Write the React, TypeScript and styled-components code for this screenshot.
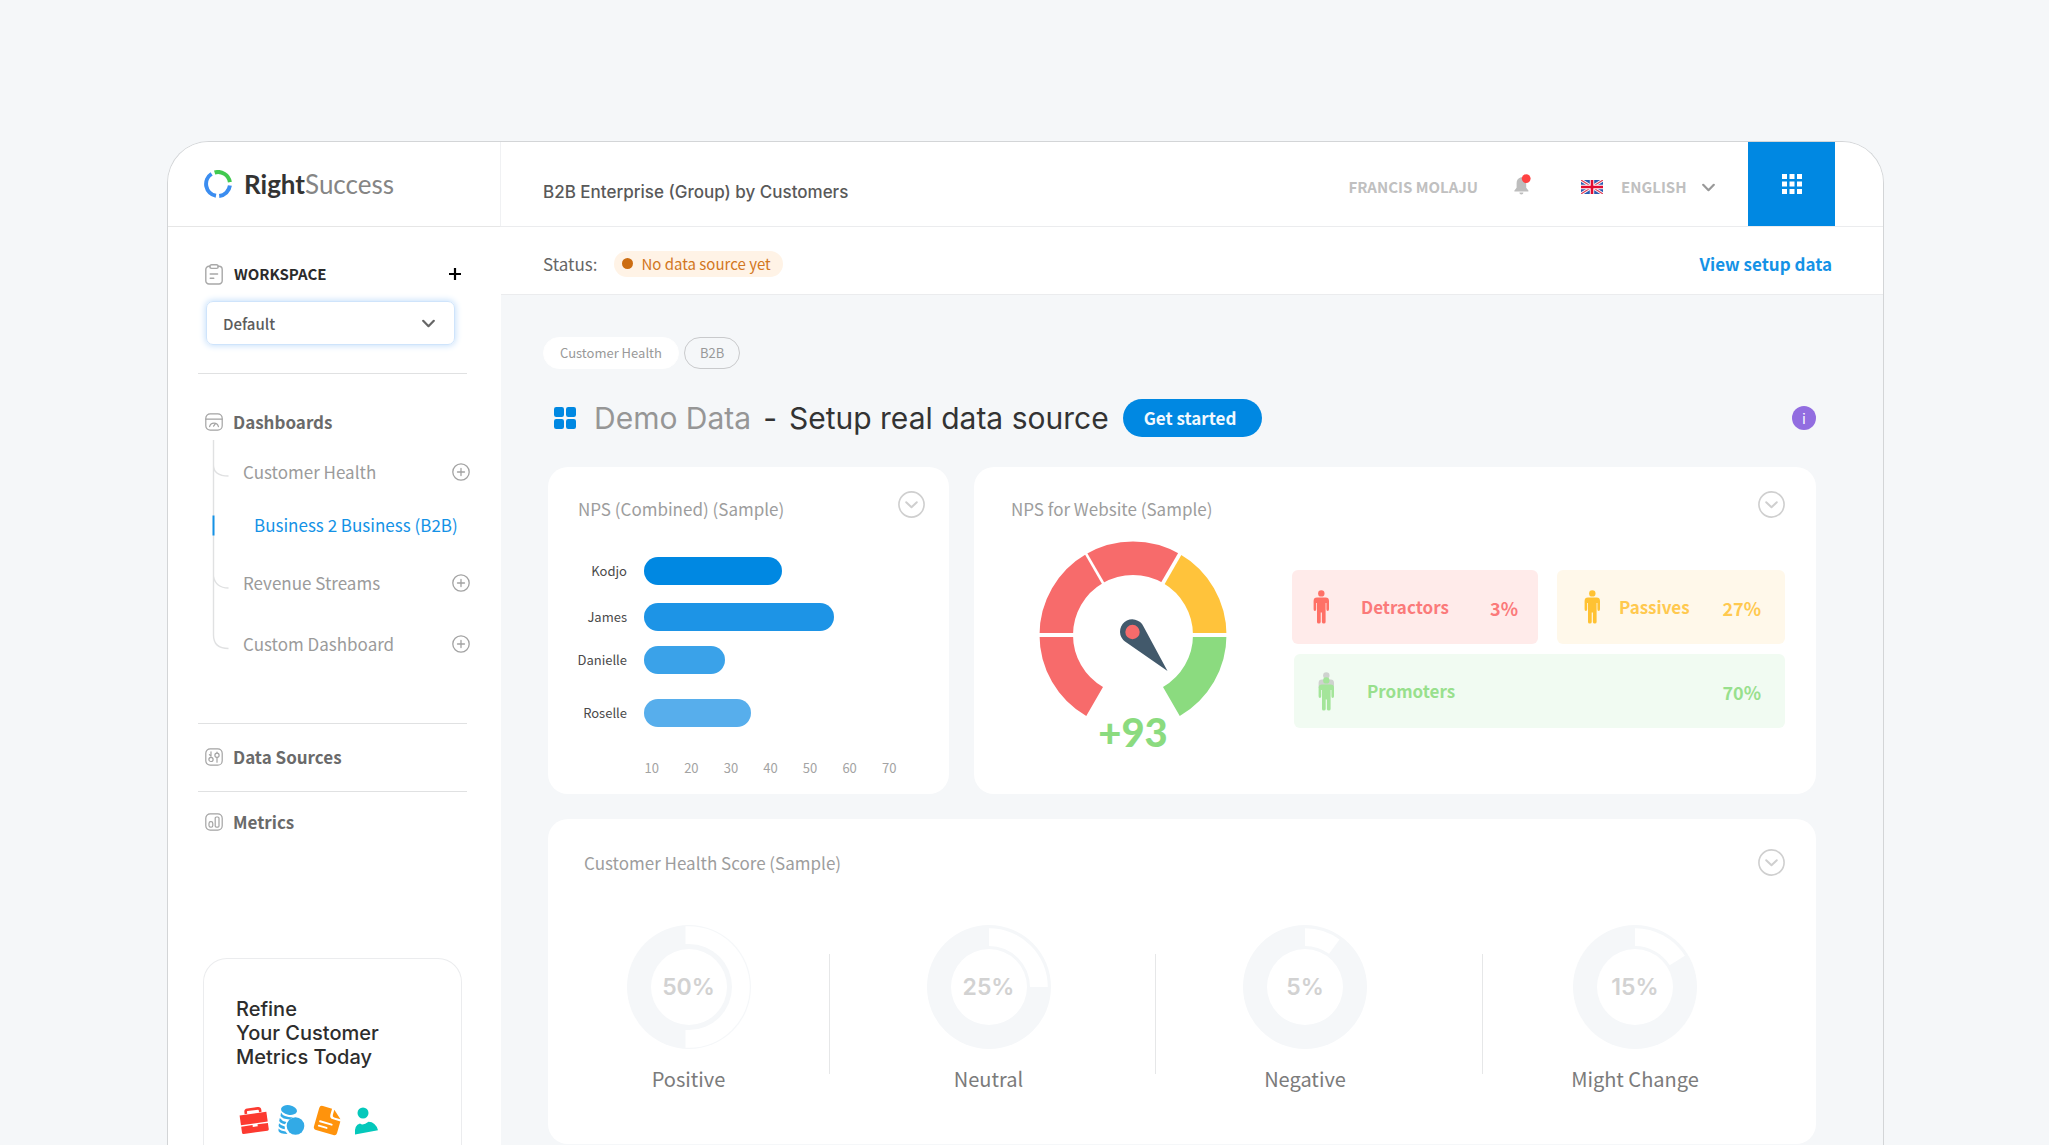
import React from "react";
import styled, { createGlobalStyle } from "styled-components";

const body = `"Noto Sans CJK SC", "Noto Sans", sans-serif`;
const display = `Inter, "Noto Sans", sans-serif`;
const blue = "#0088e2";

const Global = createGlobalStyle`
  *, *::before, *::after { box-sizing: border-box; }
  body { margin: 0; background: #f5f7f9; font-family: ${body}; color: #333; }
  button, select { font: inherit; color: inherit; background: none; border: 0; padding: 0; margin: 0; cursor: pointer; }
  a { text-decoration: none; color: inherit; }
  ul { list-style: none; margin: 0; padding: 0; }
  h1, h2, p { margin: 0; font-weight: 400; }
  svg { display: block; flex: none; }
`;

const Page = styled.div`
  min-height: 100vh;
  padding: 141px 165px 0 167px;
  display: flex;
`;
const Frame = styled.div`
  flex: 1;
  display: grid;
  grid-template-columns: 333px minmax(0, 1fr);
  border: 1px solid #d3d5d7;
  border-bottom: 0;
  border-radius: 42px 42px 0 0;
  overflow: hidden;
`;

/* Sidebar */
const Sidebar = styled.aside`
  background: #fff;
  display: flex;
  flex-direction: column;
`;
const Brand = styled.div`
  height: 85px;
  padding-left: 36px;
  display: flex;
  align-items: center;
  gap: 12px;
  border-bottom: 1px solid #e6e6e6;
  border-right: 1px solid #f0f1f3;
`;
const BrandName = styled.span<{ $light?: boolean }>`
  font-family: Lato, sans-serif;
  font-size: 26px;
  line-height: 32px;
  font-weight: ${(p) => (p.$light ? 400 : 700)};
  color: ${(p) => (p.$light ? "#858585" : "#333")};
`;
const SideBody = styled.div`
  flex: 1;
  display: flex;
  flex-direction: column;
  padding: 35px 34px 0 30px;
`;
const WorkspaceRow = styled.div`
  display: flex;
  align-items: center;
  gap: 11px;
  height: 24px;
  padding: 0 5px 0 7px;
`;
const WorkspaceLabel = styled.label`
  flex: 1;
  font-size: 15px;
  line-height: 24px;
  font-weight: 700;
  color: #2b2b2b;
`;
const WorkspaceField = styled.div`
  display: grid;
  align-items: center;
  height: 44px;
  margin: 15px 12px 28px 8px;
  border: 1px solid #cfe4fb;
  border-radius: 7px;
  box-shadow: 0 0 6px 1px #c8e1fb;
  > * { grid-area: 1 / 1; }
  > svg { justify-self: end; margin-right: 19px; pointer-events: none; }
  select {
    appearance: none;
    height: 42px;
    padding: 0 16px;
    font-size: 15px;
    font-weight: 500;
    color: #5c5c5c;
    outline: 0;
  }
`;
const Rule = styled.hr`
  width: 100%;
  height: 1px;
  margin: 0;
  border: 0;
  background: #e0e1e2;
`;
const SectionLink = styled.a<{ $height: number }>`
  display: flex;
  align-items: center;
  gap: 10px;
  height: ${(p) => p.$height}px;
  padding: 0 0 2px 7px;
  font-size: 17px;
  line-height: 24px;
  font-weight: 700;
  color: #6a6a6a;
`;
const Tree = styled.div`
  display: grid;
  grid-template-columns: 17px 1fr;
  margin-top: -32px;
  padding: 0 0 50px 14px;
`;
const TreeList = styled.ul`
  padding-top: 5px;
`;
const TreeItem = styled.li<{ $height: number; $active?: boolean }>`
  display: flex;
  align-items: center;
  justify-content: space-between;
  height: ${(p) => p.$height}px;
  padding-left: ${(p) => (p.$active ? 25 : 14)}px;
  margin-right: -3px;
  font-size: 17px;
  line-height: 24px;
  white-space: nowrap;
  color: ${(p) => (p.$active ? "#1492e6" : "#9b9b9b")};
`;
const Promo = styled.section`
  flex: 1;
  margin: 104px 5px 0;
  padding: 38px 32px 0;
  border: 1px solid #ebecee;
  border-bottom: 0;
  border-radius: 24px 24px 0 0;
`;
const PromoTitle = styled.h2`
  font-family: ${display};
  font-size: 20px;
  line-height: 24px;
  font-weight: 500;
  color: #2d2d2d;
`;
const PromoIcons = styled.div`
  display: flex;
  gap: 8px;
  padding: 35px 0 0 3px;
`;

/* Main column */
const Main = styled.div`
  display: flex;
  flex-direction: column;
  min-width: 0;
`;
const TopBar = styled.header`
  display: flex;
  align-items: center;
  height: 85px;
  padding: 0 48px 0 42px;
  background: #fff;
  border-bottom: 1px solid #ebecee;
`;
const PageName = styled.p`
  flex: 1;
  padding-top: 15px;
  font-family: ${display};
  font-size: 17px;
  line-height: 24px;
  font-weight: 500;
  color: #595959;
`;
const TopText = styled.span`
  padding-top: 6px;
  font-size: 15px;
  line-height: 24px;
  font-weight: 700;
  color: #c0c0c0;
`;
const IconButton = styled.button`
  display: flex;
  align-items: center;
  justify-content: center;
`;
const BellButton = styled(IconButton)`
  margin: 0 50px 0 36px;
`;
const Language = styled.label`
  display: grid;
  grid-template-columns: 22px 97px;
  align-items: center;
  gap: 18px;
  margin: 6px 30px 0 0;
  > select, > svg:last-child { grid-area: 1 / 2; }
  > svg:last-child { justify-self: end; margin-right: 3px; pointer-events: none; }
  select {
    appearance: none;
    font-size: 15px;
    line-height: 24px;
    font-weight: 700;
    color: #c0c0c0;
  }
`;
const AppsButton = styled(IconButton)`
  align-self: stretch;
  width: 87px;
  background: ${blue};
`;
const StatusBar = styled.div`
  display: flex;
  align-items: center;
  height: 68px;
  padding: 6px 51px 0 42px;
  background: #fff;
  border-bottom: 1px solid #ebecee;
`;
const StatusLabel = styled.span`
  font-size: 17px;
  line-height: 24px;
  color: #666;
`;
const StatusPill = styled.span`
  display: flex;
  align-items: center;
  gap: 8px;
  height: 26px;
  margin: 0 auto 0 17px;
  padding: 0 12px 0 8px;
  border-radius: 13px;
  background: #fff3e6;
  font-size: 15px;
  line-height: 24px;
  color: #d27722;
  &::before {
    content: "";
    width: 11px;
    height: 11px;
    border-radius: 50%;
    background: #cc6d12;
  }
`;
const SetupLink = styled.a`
  font-size: 17px;
  line-height: 24px;
  font-weight: 700;
  color: #1592e6;
`;
const Content = styled.main`
  flex: 1;
  padding: 42px 67px 1px 42px;
`;
const Tags = styled.div`
  display: flex;
  gap: 5px;
`;
const Tag = styled.button<{ $outline?: boolean }>`
  height: 32px;
  padding: 0 ${(p) => (p.$outline ? 15 : 16)}px;
  border: 1px solid ${(p) => (p.$outline ? "#c9cacc" : "#fff")};
  border-radius: 16px;
  background: ${(p) => (p.$outline ? "transparent" : "#fff")};
  font-size: 13px;
  line-height: 20px;
  color: #999;
`;
const TitleRow = styled.div`
  display: flex;
  align-items: center;
  padding: 30px 0 30px 11px;
`;
const Title = styled.h1`
  display: flex;
  gap: 12px;
  margin: 0 14px 0 18px;
  font-family: ${display};
  font-size: 30px;
  line-height: 38px;
  font-weight: 400;
  white-space: nowrap;
  color: #333;
`;
const Muted = styled.span`
  color: #969696;
`;
const StartButton = styled.button`
  height: 38px;
  padding: 0 26px 0 21px;
  border-radius: 19px;
  background: ${blue};
  font-size: 17px;
  line-height: 24px;
  font-weight: 700;
  color: #f1f8fe;
`;
const InfoButton = styled.button`
  width: 24px;
  height: 24px;
  margin-left: auto;
  border-radius: 50%;
  background: #926de0;
  font-size: 14px;
  line-height: 24px;
  color: #fff;
`;
const Cards = styled.div`
  display: grid;
  grid-template-columns: 401fr 842fr;
  gap: 25px;
  padding-left: 5px;
`;
const Card = styled.section<{ $wide?: boolean }>`
  display: flex;
  flex-direction: column;
  grid-column: ${(p) => (p.$wide ? "1 / -1" : "auto")};
  min-height: ${(p) => (p.$wide ? 325 : 327)}px;
  border-radius: 20px;
  background: #fff;
`;
const CardHead = styled.div<{ $left: number; $right: number; $centered?: boolean }>`
  display: flex;
  align-items: ${(p) => (p.$centered ? "center" : "flex-start")};
  justify-content: space-between;
  padding: ${(p) => (p.$centered ? 30 : 24)}px ${(p) => p.$right}px 0 ${(p) => p.$left}px;
  > h2 { padding-top: ${(p) => (p.$centered ? 0 : 6)}px; }
`;
const CardTitle = styled.h2`
  font-size: 17px;
  line-height: 24px;
  color: #9d9d9d;
`;

/* Bar chart */
const Bars = styled.ul`
  padding: 36px 0 0 22px;
`;
const BarRow = styled.li<{ $after: number }>`
  display: grid;
  grid-template-columns: 57px 1fr;
  align-items: center;
  gap: 17px;
  margin-bottom: ${(p) => p.$after}px;
  font-size: 13px;
  line-height: 20px;
  color: #4a4a4a;
  > span { text-align: right; }
`;
const Bar = styled.div<{ $color: string }>`
  height: 28px;
  border-radius: 14px;
  background: ${(p) => p.$color};
`;
const Axis = styled.div`
  display: grid;
  grid-template-columns: repeat(7, 1fr);
  margin: 31px 40px 0 84px;
  font-size: 13px;
  line-height: 20px;
  text-align: center;
  color: #a3a3a3;
`;

/* NPS gauge */
const NpsBody = styled.div`
  display: flex;
  justify-content: space-between;
  padding: 20px 31px 0 65px;
`;
const GaugeWrap = styled.div`
  display: flex;
  flex-direction: column;
  align-items: center;
`;
const Score = styled.p`
  margin-top: -7px;
  font-family: Lato, sans-serif;
  font-size: 40px;
  line-height: 44px;
  font-weight: 900;
  color: #8bdb7f;
`;
const Segments = styled.div`
  flex: 0 1 493px;
  display: grid;
  grid-template-columns: 246fr 228fr;
  gap: 10px 19px;
  margin-top: 29px;
  align-content: start;
`;
const Segment = styled.div<{ $bg: string; $color: string; $wide?: boolean; $left: number; $gap: number; $right: number }>`
  display: flex;
  align-items: center;
  grid-column: ${(p) => (p.$wide ? "1 / -1" : "auto")};
  height: 74px;
  margin-left: ${(p) => (p.$wide ? 2 : 0)}px;
  padding: 0 ${(p) => p.$right}px 0 ${(p) => p.$left}px;
  border-radius: 6px;
  background: ${(p) => p.$bg};
  color: ${(p) => p.$color};
  font-size: 17px;
  line-height: 24px;
  font-weight: 700;
  > span { margin-left: ${(p) => p.$gap}px; }
  > strong { margin-left: auto; padding-top: 2px; font-size: 18px; font-weight: 700; }
`;

/* Health score */
const Scores = styled.div`
  display: grid;
  grid-template-columns: 282fr 326fr 327fr 333fr;
  margin-top: 49px;
`;
const ScoreCell = styled.div<{ $trim: number }>`
  display: grid;
  grid-template-columns: 1fr 1px;
  > hr { width: 1px; height: 120px; margin: 29px 0 0; border: 0; background: #e6e7e8; }
  > div { display: flex; flex-direction: column; align-items: center; padding-right: ${(p) => p.$trim}px; }
`;
const Donut = styled.div`
  display: grid;
  place-items: center;
  > * { grid-area: 1 / 1; }
`;
const DonutValue = styled.span`
  font-family: ${display};
  font-size: 23px;
  line-height: 28px;
  font-weight: 600;
  color: #d2d2d2;
`;
const DonutLabel = styled.p`
  margin-top: 15px;
  font-size: 20px;
  line-height: 30px;
  color: #7b7b7b;
`;

const Chevron = ({ color = "#666" }: { color?: string }) => (
  <svg width="13" height="13" viewBox="0 0 13 13" fill="none" stroke={color} strokeWidth="2.2" strokeLinecap="round" strokeLinejoin="round">
    <path d="M1.2 3.8 6.5 9.2 11.8 3.8" />
  </svg>
);

const CollapseButton = () => (
  <IconButton aria-label="Collapse">
    <svg width="27" height="27" viewBox="0 0 27 27" fill="none" stroke="#cfcfcf" strokeWidth="1.6" strokeLinecap="round" strokeLinejoin="round">
      <circle cx="13.5" cy="13.5" r="12.6" />
      <path d="m8.2 11.2 5.3 5 5.3-5" strokeWidth="2" />
    </svg>
  </IconButton>
);

const AddButton = ({ name }: { name: string }) => (
  <IconButton aria-label={`Add to ${name}`}>
    <svg width="18" height="18" viewBox="0 0 18 18" fill="none" stroke="#a3a3a3" strokeWidth="1.3" strokeLinecap="round">
      <circle cx="9" cy="9" r="8.2" />
      <path d="M9 5.5v7M5.5 9h7" />
    </svg>
  </IconButton>
);

const Logo = () => (
  <svg width="28" height="28" viewBox="0 0 28 28" fill="none" strokeWidth="4">
    <path d="M10.6 2.5a12 12 0 0 1 15.3 9.6" stroke="#41c94f" />
    <path d="M25.9 15.5a12 12 0 0 1-10.7 10.4M12 25.8A12 12 0 0 1 7.6 3.9" stroke="#3b8df0" />
  </svg>
);

const ClipboardIcon = () => (
  <svg width="18" height="21" viewBox="0 0 18 21" fill="none" stroke="#a8a8a8" strokeWidth="1.4" strokeLinecap="round">
    <path d="M5 2.3H4A3.2 3.2 0 0 0 .8 5.5v11.2A3.2 3.2 0 0 0 4 20h10a3.2 3.2 0 0 0 3.2-3.3V5.5A3.2 3.2 0 0 0 14 2.3h-1" />
    <rect x="4.8" y=".8" width="8.4" height="3.6" rx="1.8" />
    <path d="M5.2 10h7.4M5.2 14.3h3.6" />
  </svg>
);

const squareProps = { width: 18, height: 18, viewBox: "0 0 18 18", fill: "none", stroke: "#a3a3a3", strokeWidth: 1.2, strokeLinecap: "round" as const };

const DashboardIcon = () => (
  <svg {...squareProps}>
    <rect x=".8" y=".8" width="16.4" height="16.4" rx="4.4" />
    <path d="M1 6.2h16M4.6 13.6a4.5 4.5 0 0 1 8.8 0M8.6 13.2l1.8-2.6" />
  </svg>
);
const SourcesIcon = () => (
  <svg {...squareProps}>
    <rect x=".8" y=".8" width="16.4" height="16.4" rx="4.4" />
    <circle cx="6" cy="11.4" r="2.1" />
    <circle cx="12" cy="7.2" r="2.1" />
    <path d="M6 3.8v4.400M4.4 6.6 6 8.2M12 9.6v4.6M12 4v.6" />
  </svg>
);
const MetricsIcon = () => (
  <svg {...squareProps}>
    <rect x=".8" y=".8" width="16.4" height="16.4" rx="4.4" />
    <rect x="4" y="8.6" width="3.8" height="5.6" rx="1.8" />
    <rect x="10.2" y="4" width="3.8" height="10.2" rx="1.2" />
  </svg>
);

const TreeLines = () => (
  <svg width="17" height="212" viewBox="0 0 17 212" fill="none" stroke="#e0e1e2" strokeWidth="1.4">
    <path d="M1.5 0v195q0 13.500 15 13.500M1.5 25q0 11 15 11M1.5 136q2 12 15 12" />
    <path d="M1.5 75.5v20" stroke="#1492e6" strokeWidth="2" />
  </svg>
);

const FourSquares = () => (
  <svg width="22" height="22" viewBox="0 0 22 22" fill={blue}>
    <rect width="10" height="10" rx="2.2" />
    <rect x="12" width="10" height="10" rx="2.2" />
    <rect y="12" width="10" height="10" rx="2.2" />
    <rect x="12" y="12" width="10" height="10" rx="2.2" />
  </svg>
);

const Apps = () => (
  <svg width="20" height="20" viewBox="0 0 20 20" fill="#fff">
    {[0, 7.5, 15].map((y) => [0, 7.5, 15].map((x) => <rect key={`${x}-${y}`} x={x} y={y} width="5" height="5" />))}
  </svg>
);

const Bell = () => (
  <svg width="17" height="21" viewBox="0 0 17 21">
    <path d="M7 3.2C3.8 4 2.6 6.4 2.6 9.2v4.6L.4 16.6v1h14v-1l-2.2-2.8V9.2C12.2 6.4 10.6 4 8.4 3.2Z" fill="#bdbdbd" />
    <path d="M5.4 18.6h4a2 2 0 0 1-4 0Z" fill="#bdbdbd" />
    <circle cx="12.2" cy="4.6" r="4.4" fill="#ff4242" />
  </svg>
);

const Flag = () => (
  <svg width="22" height="14" viewBox="0 0 22 14">
    <rect width="22" height="14" fill="#2c5ab0" />
    <path d="M0 0l22 14M22 0 0 14" stroke="#fff" strokeWidth="3" />
    <path d="M0 0l22 14M22 0 0 14" stroke="#e0405a" strokeWidth="1.2" />
    <path d="M11 0v14M0 7h22" stroke="#fff" strokeWidth="4.4" />
    <path d="M11 0v14M0 7h22" stroke="#e00b30" strokeWidth="2.6" />
  </svg>
);

const personBody =
  "M4 7.5h8.6q3.4 0 3.4 3.4v8.4q0 1.6-1.3 1.6t-1.3-1.6v-6.4h-.8v19q0 1.7-1.8 1.7t-1.9-1.7V22.5h-1.200v9.400q0 1.7-1.9 1.7T4 31.9v-19h-.8v6.4q0 1.6-1.3 1.6T.6 19.3v-8.4Q.6 7.5 4 7.5Z";

const Person = ({ fill }: { fill: string }) => (
  <svg width="17" height="34" viewBox="0 0 17 34" fill={fill}>
    <circle cx="8.3" cy="3.4" r="3.2" />
    <path d={personBody} />
  </svg>
);
const PersonPartial = () => (
  <svg width="17" height="39" viewBox="0 0 17 39">
    <g fill="#cfd2cf">
      <circle cx="8.3" cy="3.4" r="3.2" />
      <path d="M4 7.5h8.6q3.4 0 3.4 3.4v5H.6v-5Q.6 7.5 4 7.5Z" />
    </g>
    <g fill="#a4e59a" transform="translate(0 5)">
      <circle cx="8.3" cy="3.4" r="3.2" />
      <path d={personBody} />
    </g>
  </svg>
);

const polar = (r: number, deg: number) => {
  const a = (deg * Math.PI) / 180;
  return `${(94 + r * Math.cos(a)).toFixed(2)} ${(94 + r * Math.sin(a)).toFixed(2)}`;
};
const gaugeColors = ["#f76b6b", "#f76b6b", "#f76b6b", "#ffc33b", "#8bdb7f"];

const Gauge = () => (
  <svg width="188" height="176" viewBox="0 0 188 176">
    {gaugeColors.map((c, i) => {
      const from = 120 + i * 60;
      const to = from + 60;
      return <path key={i} fill={c} d={`M${polar(93.5, from)}A93.5 93.5 0 0 1 ${polar(93.5, to)}L${polar(60, to)}A60 60 0 0 0 ${polar(60, from)}Z`} />;
    })}
    {[180, 240, 300, 360].map((a) => (
      <path key={a} stroke="#fff" strokeWidth={a === 240 ? 2.6 : 3.8} d={`M${polar(58, a)}L${polar(96, a)}`} />
    ))}
    <path d="M128.500 130 86 100.500A12.300 12.300 0 1 1 104.500 85.500Z" fill="#42596b" />
    <circle cx="93.5" cy="91" r="7.2" fill="#f76b6b" />
  </svg>
);

const DonutRing = ({ sweep, half }: { sweep: number; half?: boolean }) => {
  const a = ((sweep - 90) * Math.PI) / 180;
  const x0 = half ? 58.5 : 62;
  const ro = half ? 60.8 : 58.8;
  const ri = half ? 43 : 41;
  const p = (r: number, t: number) => `${(62 + r * Math.cos(t)).toFixed(2)} ${(62 + r * Math.sin(t)).toFixed(2)}`;
  return (
    <svg width="124" height="124" viewBox="0 0 124 124">
      <circle cx="62" cy="62" r="62" fill="#f5f7f9" />
      {half ? (
        <path d={`M${x0} ${62 - ro}H62A${ro} ${ro} 0 0 1 62 ${62 + ro}H${x0}V${62 + ri}H62A${ri} ${ri} 0 0 0 62 ${62 - ri}H${x0}Z`} fill="#fff" />
      ) : (
        <path d={`M${x0} ${62 - ro}A${ro} ${ro} 0 0 1 ${p(ro, a)}L${p(ri, a)}A${ri} ${ri} 0 0 0 ${x0} ${62 - ri}Z`} fill="#fff" />
      )}
      <circle cx="62" cy="62" r="38" fill="#fff" />
    </svg>
  );
};

const Briefcase = () => (
  <svg width="30" height="32" viewBox="0 0 30 32">
    <g transform="rotate(-8 15 17)" fill="#fc3a30">
      <path d="M1.5 9.5h27v10h-27Z" />
      <path d="M1.5 20.800h11.5v2h5v-2h10.5v6.200q0 1.500-1.500 1.500H3q-1.500 0-1.500-1.500Z" />
      <path d="M8 9V7q0-2 2-2h10.5q2 0 2 2v2" fill="none" stroke="#fc3a30" strokeWidth="2.6" />
    </g>
  </svg>
);
const Coins = () => (
  <svg width="28" height="32" viewBox="0 0 28 32" fill="#32aae6">
    <ellipse cx="12" cy="6" rx="8" ry="4.8" transform="rotate(10 12 6)" />
    <circle cx="18.5" cy="22" r="8.8" />
    <path d="M4 8.5q2 4.500 12 5l-3.500 2Q5.5 15 3.5 12ZM2.8 14q2 3 6.600 4L8 20.300Q3.5 19.5 2.2 17ZM2 19.3q2 2.500 5.800 3.200v2.700Q3 24.5 1.6 22ZM1.5 24.5q2 2.300 7 3l2 2.600Q2.5 30 1.5 27Z" />
  </svg>
);
const Sheet = () => (
  <svg width="30" height="32" viewBox="0 0 30 32">
    <g transform="rotate(16 15 17)">
      <path d="M6 4h9.500v6q0 4 4 4H27v12q0 3-3 3H6q-3 0-3-3V7q0-3 3-3Z" fill="#ff930c" />
      <path d="M18 4.5 26.5 12H20q-2 0-2-2Z" fill="#ff930c" />
      <path d="M7.5 19.5h12M7.5 24h8" stroke="#fff" strokeWidth="2" strokeLinecap="round" />
    </g>
  </svg>
);
const UserIcon = () => (
  <svg width="28" height="32" viewBox="0 0 28 32" fill="#04c8bb">
    <circle cx="12" cy="9" r="5.5" />
    <path d="M4 30.5Q3 21 9 19.500q3 2.500 8.500-1.700Q24.5 18 27 26.200Z" />
  </svg>
);

const treeItems = [
  { name: "Customer Health", height: 54 },
  { name: "Business 2 Business (B2B)", height: 52, active: true },
  { name: "Revenue Streams", height: 64 },
  { name: "Custom Dashboard", height: 58 },
];

const bars = [
  { name: "Kodjo", share: 45.4, color: "#0088e2", after: 18 },
  { name: "James", share: 62.3, color: "#1d94e6", after: 15 },
  { name: "Danielle", share: 26.5, color: "#3aa2e9", after: 25 },
  { name: "Roselle", share: 35.1, color: "#57aeec", after: 0 },
];

const scores = [
  { name: "Positive", value: 50, sweep: 180, trim: 0 },
  { name: "Neutral", value: 25, sweep: 90, trim: 8 },
  { name: "Negative", value: 5, sweep: 36, trim: 28 },
  { name: "Might Change", value: 15, sweep: 58, trim: 28 },
];

export default function App() {
  return (
    <>
      <Global />
      <Page>
        <Frame>
          <Sidebar>
            <Brand>
              <Logo />
              <span>
                <BrandName>Right</BrandName>
                <BrandName $light>Success</BrandName>
              </span>
            </Brand>
            <SideBody>
              <WorkspaceRow>
                <ClipboardIcon />
                <WorkspaceLabel htmlFor="workspace">WORKSPACE</WorkspaceLabel>
                <IconButton aria-label="Add workspace">
                  <svg width="14" height="14" viewBox="0 0 14 14" stroke="#000" strokeWidth="2.2">
                    <path d="M7 1v12M1 7h12" />
                  </svg>
                </IconButton>
              </WorkspaceRow>
              <WorkspaceField>
                <select id="workspace" defaultValue="Default">
                  <option>Default</option>
                </select>
                <Chevron />
              </WorkspaceField>
              <Rule />
              <nav>
                <SectionLink href="#dashboards" $height={98}>
                  <DashboardIcon />
                  Dashboards
                </SectionLink>
                <Tree>
                  <TreeLines />
                  <TreeList>
                    {treeItems.map((t) => (
                      <TreeItem key={t.name} $height={t.height} $active={t.active}>
                        <a href="#board">{t.name}</a>
                        {!t.active && <AddButton name={t.name} />}
                      </TreeItem>
                    ))}
                  </TreeList>
                </Tree>
                <Rule />
                <SectionLink href="#sources" $height={67}>
                  <SourcesIcon />
                  Data Sources
                </SectionLink>
                <Rule />
                <SectionLink href="#metrics" $height={62}>
                  <MetricsIcon />
                  Metrics
                </SectionLink>
              </nav>
              <Promo>
                <PromoTitle>
                  Refine
                  <br />
                  Your Customer
                  <br />
                  Metrics Today
                </PromoTitle>
                <PromoIcons>
                  <Briefcase />
                  <Coins />
                  <Sheet />
                  <UserIcon />
                </PromoIcons>
              </Promo>
            </SideBody>
          </Sidebar>

          <Main>
            <TopBar>
              <PageName>B2B Enterprise (Group) by Customers</PageName>
              <TopText>FRANCIS MOLAJU</TopText>
              <BellButton aria-label="Notifications">
                <Bell />
              </BellButton>
              <Language>
                <Flag />
                <select aria-label="Language" defaultValue="ENGLISH">
                  <option>ENGLISH</option>
                </select>
                <Chevron color="#999" />
              </Language>
              <AppsButton aria-label="Apps">
                <Apps />
              </AppsButton>
            </TopBar>
            <StatusBar>
              <StatusLabel>Status:</StatusLabel>
              <StatusPill>No data source yet</StatusPill>
              <SetupLink href="#setup">View setup data</SetupLink>
            </StatusBar>
            <Content>
              <Tags>
                <Tag>Customer Health</Tag>
                <Tag $outline>B2B</Tag>
              </Tags>
              <TitleRow>
                <FourSquares />
                <Title>
                  <Muted>Demo Data</Muted>
                  <span>-</span>
                  <span>Setup real data source</span>
                </Title>
                <StartButton>Get started</StartButton>
                <InfoButton aria-label="Information">i</InfoButton>
              </TitleRow>
              <Cards>
                <Card>
                  <CardHead $left={30} $right={24}>
                    <CardTitle>NPS (Combined) (Sample)</CardTitle>
                    <CollapseButton />
                  </CardHead>
                  <Bars>
                    {bars.map((b) => (
                      <BarRow key={b.name} $after={b.after}>
                        <span>{b.name}</span>
                        <Bar $color={b.color} style={{ width: `${b.share}%` }} />
                      </BarRow>
                    ))}
                  </Bars>
                  <Axis>
                    {[10, 20, 30, 40, 50, 60, 70].map((n) => (
                      <span key={n}>{n}</span>
                    ))}
                  </Axis>
                </Card>
                <Card>
                  <CardHead $left={37} $right={31}>
                    <CardTitle>NPS for Website (Sample)</CardTitle>
                    <CollapseButton />
                  </CardHead>
                  <NpsBody>
                    <GaugeWrap>
                      <Gauge />
                      <Score>+93</Score>
                    </GaugeWrap>
                    <Segments>
                      <Segment $bg="#ffebea" $color="#fb7a7a" $left={21} $gap={31} $right={20}>
                        <Person fill="#ff7066" />
                        <span>Detractors</span>
                        <strong>3%</strong>
                      </Segment>
                      <Segment $bg="#fff8ea" $color="#ffc94f" $left={27} $gap={18} $right={24}>
                        <Person fill="#ffc233" />
                        <span>Passives</span>
                        <strong>27%</strong>
                      </Segment>
                      <Segment $wide $bg="#f1fbf2" $color="#98e08d" $left={24} $gap={32} $right={24}>
                        <PersonPartial />
                        <span>Promoters</span>
                        <strong>70%</strong>
                      </Segment>
                    </Segments>
                  </NpsBody>
                </Card>
                <Card $wide>
                  <CardHead $left={36} $right={31} $centered>
                    <CardTitle>Customer Health Score (Sample)</CardTitle>
                    <CollapseButton />
                  </CardHead>
                  <Scores>
                    {scores.map((s, i) => (
                      <ScoreCell key={s.name} $trim={s.trim}>
                        <div>
                          <Donut>
                            <DonutRing sweep={s.sweep} half={i === 0} />
                            <DonutValue>{s.value}%</DonutValue>
                          </Donut>
                          <DonutLabel>{s.name}</DonutLabel>
                        </div>
                        {i < scores.length - 1 && <hr />}
                      </ScoreCell>
                    ))}
                  </Scores>
                </Card>
              </Cards>
            </Content>
          </Main>
        </Frame>
      </Page>
    </>
  );
}
